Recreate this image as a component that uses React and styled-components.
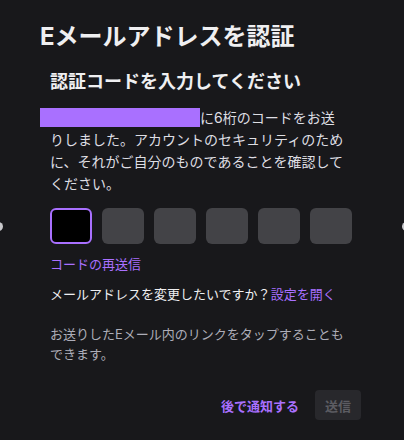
import React from 'react';
import styled, { createGlobalStyle } from 'styled-components';

const GlobalStyle = createGlobalStyle`
  html, body {
    margin: 0;
    padding: 0;
    background-color: #18181b;
  }
  body {
    font-family: Inter, "Noto Sans CJK JP", sans-serif;
    color: #efeff1;
  }
`;

const Modal = styled.div`
  position: relative;
  width: 404px;
  height: 440px;
  box-sizing: border-box;
  padding: 21px 43px 0 40px;
  background-color: #18181b;
  overflow: hidden;
`;

const Title = styled.h1`
  margin: 0;
  font-size: 24px;
  line-height: 32px;
  font-weight: 700;
  color: #efeff1;
`;

const Body = styled.div`
  padding-left: 10px;
`;

const Subtitle = styled.h2`
  margin: 17px 0 0;
  font-size: 18px;
  line-height: 24px;
  font-weight: 700;
  color: #efeff1;
`;

const Message = styled.p`
  margin: 13px 0 0;
  width: 296px;
  font-size: 14px;
  line-height: 22px;
  color: #dedee3;
`;

const Redacted = styled.span`
  display: inline-block;
  width: 160px;
  height: 19px;
  margin-left: -10px;
  vertical-align: -4px;
  background-color: #a970ff;
`;

const CodeRow = styled.div`
  display: flex;
  gap: 10px;
  margin-top: 13px;
`;

const CodeBox = styled.div`
  width: 42px;
  height: 36px;
  box-sizing: border-box;
  border-radius: 6px;
  background-color: ${(p) => (p.$active ? '#000' : '#434347')};
  border: ${(p) => (p.$active ? '2px solid #a970ff' : 'none')};
`;

const Link = styled.a`
  color: #a970ff;
  text-decoration: none;
  cursor: pointer;
  font-weight: ${(p) => (p.$bold ? 700 : 400)};
`;

const Resend = styled.div`
  margin-top: 11px;
  font-size: 13px;
  line-height: 18px;
`;

const ChangeEmail = styled.div`
  margin-top: 12px;
  font-size: 13px;
  line-height: 18px;
  color: #efeff1;
`;

const Hint = styled.p`
  margin: 21px 0 0;
  width: 300px;
  font-size: 13px;
  line-height: 20px;
  color: #adadb8;
`;

const Footer = styled.div`
  display: flex;
  justify-content: flex-end;
  align-items: center;
  gap: 16px;
  margin-top: 26px;
  font-size: 13px;
`;

const SubmitButton = styled.button`
  width: 46px;
  height: 30px;
  padding: 0;
  border: none;
  border-radius: 4px;
  background-color: #28282c;
  color: #5c5c62;
  font-family: inherit;
  font-size: 13px;
  font-weight: 700;
`;

const EdgeDot = styled.span`
  position: absolute;
  top: 222px;
  ${(p) => (p.$side === 'left' ? 'left: -6px;' : 'right: -7px;')}
  width: 9px;
  height: 9px;
  border-radius: 50%;
  background-color: #c8c8cc;
`;

const App = () => {
  const digits = [0, 1, 2, 3, 4, 5];

  return (
    <>
      <GlobalStyle />
      <Modal>
        <EdgeDot $side="left" />
        <EdgeDot $side="right" />
        <Title>Eメールアドレスを認証</Title>
        <Body>
          <Subtitle>認証コードを入力してください</Subtitle>
          <Message>
            <Redacted />
            に6桁のコードをお送りしました。アカウントのセキュリティのために、それがご自分のものであることを確認してください。
          </Message>
          <CodeRow>
            {digits.map((d) => (
              <CodeBox key={d} $active={d === 0} />
            ))}
          </CodeRow>
          <Resend>
            <Link>コードの再送信</Link>
          </Resend>
          <ChangeEmail>
            メールアドレスを変更したいですか？<Link>設定を開く</Link>
          </ChangeEmail>
          <Hint>お送りしたEメール内のリンクをタップすることもできます。</Hint>
          <Footer>
            <Link $bold>後で通知する</Link>
            <SubmitButton disabled>送信</SubmitButton>
          </Footer>
        </Body>
      </Modal>
    </>
  );
};

export default App;
